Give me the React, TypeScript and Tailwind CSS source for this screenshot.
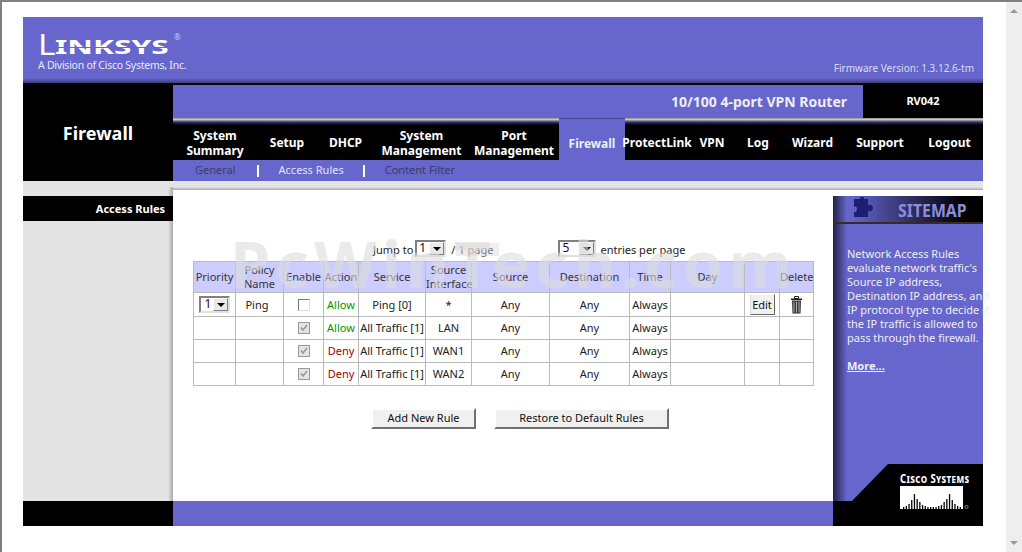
import React from 'react'

const navItems = [
  { lines: ['System', 'Summary'], width: 'w-[84px]' },
  { lines: ['Setup'], width: 'w-[60px]' },
  { lines: ['DHCP'], width: 'w-[57px]' },
  { lines: ['System', 'Management'], width: 'w-[95px]' },
  { lines: ['Port', 'Management'], width: 'w-[90px]' },
  { lines: ['Firewall'], width: 'w-[66px]', active: true },
  { lines: ['ProtectLink'], width: 'w-[64px]' },
  { lines: ['VPN'], width: 'w-[46px]' },
  { lines: ['Log'], width: 'w-[46px]' },
  { lines: ['Wizard'], width: 'w-[63px]' },
  { lines: ['Support'], width: 'w-[72px]' },
  { lines: ['Logout'], width: 'w-[67px]' },
]

const rules = [
  { editable: true, name: 'Ping', action: 'Allow', service: 'Ping [0]', iface: '*' },
  { editable: false, name: '', action: 'Allow', service: 'All Traffic [1]', iface: 'LAN' },
  { editable: false, name: '', action: 'Deny', service: 'All Traffic [1]', iface: 'WAN1' },
  { editable: false, name: '', action: 'Deny', service: 'All Traffic [1]', iface: 'WAN2' },
]

const colWidths = [42, 48, 40, 35, 67, 46, 78, 80, 41, 74, 35, 34]

const ciscoBars = [2, 3, 5, 9, 15, 10, 7, 4, 3, 2, 2, 2, 2, 3, 4, 7, 10, 15, 9, 5, 3, 2]

function FakeSelect({ value, width }: { value: string; width: string }) {
  return (
    <div className={`flex h-[17px] ${width} border-2 border-t-[#808080] border-l-[#808080] border-r-[#e0e0e0] border-b-[#e0e0e0] bg-white`}>
      <span className="flex-1 pl-[2px] text-[12px] leading-[12px] text-[#330033]">{value}</span>
      <span className="flex w-[15px] items-center justify-center border border-t-white border-l-white border-r-[#808080] border-b-[#808080] bg-[#e8e8e8]">
        <span className="h-0 w-0 border-x-[4px] border-t-[4px] border-x-transparent border-t-black" />
      </span>
    </div>
  )
}

function RuleCheckbox({ disabled }: { disabled: boolean }) {
  return (
    <div className={`mx-auto flex h-[12px] w-[12px] items-center justify-center border ${disabled ? 'border-[#999] bg-[#e4e4e4]' : 'border-t-[#777] border-l-[#777] border-r-[#ddd] border-b-[#ddd] bg-white'}`}>
      {disabled && (
        <svg width="10" height="10" viewBox="0 0 10 10">
          <path d="M2 4.5 L4 7 L8 2" fill="none" stroke="#999" strokeWidth="1.6" />
        </svg>
      )}
    </div>
  )
}

function TrashIcon() {
  return (
    <svg width="13" height="18" viewBox="0 0 13 18" className="mx-auto">
      <path d="M4.5 0.5 h4 v2 h-4z" fill="none" stroke="#222" />
      <rect x="1" y="2.5" width="11" height="1.5" fill="#222" />
      <path d="M2 4.5 h9 l-0.5 13 h-8z" fill="#333" />
      <path d="M4 5.5 v11 M6.5 5.5 v11 M9 5.5 v11" stroke="#c4c4c4" strokeWidth="0.9" />
    </svg>
  )
}

function RaisedButton({ label, width }: { label: string; width: string }) {
  return (
    <button
      type="button"
      className={`h-[21px] ${width} border-2 border-t-white border-l-white border-r-[#707070] border-b-[#707070] bg-[#f0f0f0] text-[11px] text-[#111]`}
    >
      {label}
    </button>
  )
}

function LinksysLogo() {
  return (
    <div className="relative h-[37px] w-[150px] text-white">
      <div className="relative flex h-[21px] items-end">
        <span className="origin-left scale-x-[1.15] text-[29px] leading-[21px] font-normal">L</span>
        <span className="ml-[2px] origin-left scale-x-[1.58] text-[20px] leading-[15px] font-bold">INKSYS</span>
        <span className="absolute top-[-1px] left-[136px] text-[8px] leading-[10px] text-[#ccccee]">®</span>
        <span className="absolute top-[14px] left-[16px] h-px w-[118px] bg-[#6666cc]" />
      </div>
      <div className="mt-[5px] text-[10.5px] leading-[12px] tracking-[-0.25px] text-[#e8e8f8]">A Division of Cisco Systems, Inc.</div>
    </div>
  )
}

function CiscoLogo() {
  return (
    <div className="pointer-events-none absolute right-0 bottom-[25px] h-[37px] w-[131px]">
      <svg width="131" height="37" viewBox="0 0 131 37" className="absolute inset-0">
        <polygon points="0,37 36,0 131,0 131,37" fill="#000" />
      </svg>
      <div className="absolute top-[9px] left-[48px] origin-left scale-x-[0.8] text-[12px] leading-[12px] font-bold tracking-[0.5px] whitespace-nowrap text-white [font-variant:small-caps]">
        Cisco Systems
      </div>
    </div>
  )
}

function CiscoBars() {
  return (
    <svg width="70" height="23" viewBox="0 0 70 23" className="absolute right-[13px] bottom-[17px]">
      <rect x="0" y="0" width="63" height="23" fill="#fff" />
      {ciscoBars.map((h, i) => (
        <rect key={i} x={3 + i * 2.7} y={23 - h} width="1.3" height={h} fill="#000" />
      ))}
      <circle cx="66.5" cy="21" r="1.6" fill="none" stroke="#aaa" strokeWidth="0.7" />
    </svg>
  )
}

export default function App() {
  return (
    <div className="flex h-[552px] w-[1022px] overflow-hidden border-t-2 border-l-2 border-[#808080] bg-white [font-family:'Liberation_Sans',Arial,sans-serif]">
      <div className="w-[1004px] pt-[15px] pl-[21px]">
        <div className="relative w-[960px]">
          {/* Top banner */}
          <div className="flex h-[66px] justify-between bg-[linear-gradient(to_bottom,#6666cc_0,#6666cc_61px,#3d3d80_66px)] pt-[16px] pr-[9px] pl-[15px]">
            <LinksysLogo />
            <div className="pt-[29px] text-[10px] leading-[12px] text-[#dcdcf4]">Firmware Version: 1.3.12.6-tm</div>
          </div>

          {/* Title block and navigation */}
          <div className="flex h-[98px]">
            <div className="w-[150px] bg-black pt-[38px] text-center text-[18px] leading-[24px] font-bold text-white">Firewall</div>
            <div className="flex w-[810px] flex-col">
              <div className="h-[2px] bg-black" />
              <div className="flex h-[33px]">
                <div className="flex w-[690px] items-center justify-end bg-[#6666cc] pr-[16px] text-[14px] font-bold text-[#eeeeee]">
                  10/100 4-port VPN Router
                </div>
                <div className="flex flex-1 items-center justify-center bg-black text-[11px] font-bold text-white">RV042</div>
              </div>
              <div className="flex h-[42px] bg-[linear-gradient(to_bottom,#8c8c8c_0,#c8c8c8_1.5px,#777_3px,#33337a_4px,#000_7px)]">
                {navItems.map((item) => (
                  <div
                    key={item.lines.join(' ')}
                    className={`${item.width} flex flex-col items-center justify-center text-[12px] leading-[15px] font-bold whitespace-nowrap ${
                      item.active ? 'border-t border-[#44449a] bg-[#6666cc] pt-[7px] text-[#eeeeee]' : 'mt-[7px] text-white'
                    }`}
                  >
                    {item.lines.map((line) => (
                      <span key={line}>{line}</span>
                    ))}
                  </div>
                ))}
              </div>
              <div className="flex h-[21px] items-center bg-[#6666cc] text-[11px]">
                <span className="ml-[22px] text-[#3d3d66]">General</span>
                <span className="ml-[21px] h-[12px] w-[2px] bg-white" />
                <span className="ml-[20px] text-[#e4e4f4]">Access Rules</span>
                <span className="ml-[19px] h-[12px] w-[2px] bg-white" />
                <span className="ml-[20px] text-[#3d3d66]">Content Filter</span>
              </div>
            </div>
          </div>

          {/* Main area */}
          <div className="flex h-[320px]">
            <div className="flex w-[150px] flex-col bg-[#e4e4e4]">
              <div className="flex h-[15px] justify-end pt-[6px]">
                <div className="w-[5px] bg-[linear-gradient(to_right,#e4e4e4,#a8a8a8)]" />
              </div>
              <div className="h-[25px] bg-black pt-[5px] pr-[8px] text-right text-[11px] leading-[15px] font-bold text-white">Access Rules</div>
              <div className="flex flex-1 justify-end">
                <div className="w-[5px] bg-[linear-gradient(to_right,#e4e4e4,#a8a8a8)]" />
              </div>
            </div>

            <div className="flex flex-1 flex-col">
              <div className="h-[9px] bg-[linear-gradient(to_bottom,#e4e4e4_0,#e4e4e4_6px,#a8a8a8_9px)]" />
              <div className="flex flex-1">
                <div className="relative w-[660px] bg-white pt-[50px] pl-[20px]">
                  <div className="flex h-[17px] text-[11px] leading-[19px] text-[#222]">
                    <span className="ml-[180px]">Jump to</span>
                    <div className="ml-[2px]">
                      <FakeSelect value="1" width="w-[31px]" />
                    </div>
                    <span className="ml-[5px]">/</span>
                    <span className="mt-[3px] ml-[1px] h-[13px] w-[43px] bg-[#eeeeee] pl-[2px] leading-[13px] text-[#777]">1 page</span>
                    <div className="ml-[59px]">
                      <FakeSelect value="5" width="w-[38px]" />
                    </div>
                    <span className="ml-[4px]">entries per page</span>
                  </div>

                  <table className="mt-[4px] w-[620px] table-fixed border-collapse text-center text-[11px] leading-[14px] text-[#222]">
                    <colgroup>
                      {colWidths.map((w, i) => (
                        <col key={i} style={{ width: w }} />
                      ))}
                    </colgroup>
                    <thead>
                      <tr className="h-[31px] bg-[#ccccff] text-[#333]">
                        {['Priority', 'Policy Name', 'Enable', 'Action', 'Service', 'Source Interface', 'Source', 'Destination', 'Time', 'Day', '', 'Delete'].map((h, i) => (
                          <th key={i} className="border border-[#bbbbbb] p-0 font-normal">
                            {h}
                          </th>
                        ))}
                      </tr>
                    </thead>
                    <tbody>
                      {rules.map((rule, i) => (
                        <tr key={i} className={rule.editable ? 'h-[24px]' : 'h-[23px]'}>
                          <td className="border border-[#bbbbbb] p-0">
                            {rule.editable && (
                              <div className="flex justify-center">
                                <FakeSelect value="1" width="w-[31px]" />
                              </div>
                            )}
                          </td>
                          <td className="border border-[#bbbbbb] p-0 pr-[5px]">{rule.name}</td>
                          <td className="border border-[#bbbbbb] p-0">
                            <RuleCheckbox disabled={!rule.editable} />
                          </td>
                          <td className={`border border-[#bbbbbb] p-0 ${rule.action === 'Allow' ? 'text-[#009900]' : 'text-[#990000]'}`}>{rule.action}</td>
                          <td className="border border-[#bbbbbb] p-0 whitespace-nowrap">{rule.service}</td>
                          <td className="border border-[#bbbbbb] p-0">{rule.iface}</td>
                          <td className="border border-[#bbbbbb] p-0">Any</td>
                          <td className="border border-[#bbbbbb] p-0">Any</td>
                          <td className="border border-[#bbbbbb] p-0">Always</td>
                          <td className="border border-[#bbbbbb] p-0" />
                          <td className="border border-[#bbbbbb] p-0">
                            {rule.editable && (
                              <div className="flex justify-center">
                                <button type="button" className="h-[21px] w-[25px] border border-t-white border-l-[#ddd] border-r-[#666] border-b-[#666] bg-[#f0f0f0] text-[11px] text-[#111]">
                                  Edit
                                </button>
                              </div>
                            )}
                          </td>
                          <td className="border border-[#bbbbbb] p-0">{rule.editable && <TrashIcon />}</td>
                        </tr>
                      ))}
                    </tbody>
                  </table>

                  <div className="mt-[22px] ml-[178px] flex gap-[18px]">
                    <RaisedButton label="Add New Rule" width="w-[105px]" />
                    <RaisedButton label="Restore to Default Rules" width="w-[175px]" />
                  </div>

                  {/* Watermark over the table */}
                  <div className="pointer-events-none absolute top-[41px] left-[57px] text-[65px] leading-[65px] font-bold tracking-[5px] whitespace-nowrap text-[#dcdcdc]/60">
                    PcWinTech.com
                  </div>
                </div>

                <div className="flex w-[150px] flex-col pt-[6px]">
                  <div className="h-[28px] border-b-2 border-[#3a2a20] bg-[linear-gradient(to_right,#222244_0,#6666cc_14px,#5a5abc_30px,#000_130px)]">
                    <div className="flex h-full">
                      <svg width="26" height="25" viewBox="0 0 26 25" className="ml-[19px]">
                        <path d="M2 3 h6 c-1-3 5-3 4 0 h4 v6 c3-1 5 1 5 3 s-2 4-5 3 v6 H2 v-5 c2 1 3-1 3-3 s-1-3-3-2z" fill="#1d1d72" />
                      </svg>
                      <span className="ml-[20px] origin-left scale-x-[0.88] pt-[3px] text-[18px] leading-[22px] font-bold text-[#8c8cdc]">SITEMAP</span>
                    </div>
                  </div>
                  <div className="flex flex-1 bg-[#6666cc]">
                    <div className="w-[14px] bg-[linear-gradient(to_right,#222244,#6666cc)]" />
                    <div className="w-[130px] pt-[23px] text-[11px] leading-[14px] text-[#eeeeee]">
                      <p className="whitespace-nowrap">
                        Network Access Rules
                        <br />
                        evaluate network traffic's
                        <br />
                        Source IP address,
                        <br />
                        Destination IP address, and
                        <br />
                        IP protocol type to decide if
                        <br />
                        the IP traffic is allowed to
                        <br />
                        pass through the firewall.
                      </p>
                      <p className="mt-[14px] font-bold underline">More...</p>
                    </div>
                  </div>
                </div>
              </div>
            </div>
          </div>

          {/* Footer band */}
          <div className="flex h-[25px]">
            <div className="w-[150px] bg-black" />
            <div className="w-[660px] bg-[#6666cc]" />
            <div className="w-[150px] bg-black" />
          </div>

          <CiscoLogo />
          <CiscoBars />
        </div>
      </div>

      {/* Scrollbar */}
      <div className="flex h-full w-[16px] flex-col items-center justify-between bg-[#eeeeee] py-[7px]">
        <span className="h-0 w-0 border-x-[4px] border-b-[4px] border-x-transparent border-b-[#999]" />
        <span className="h-0 w-0 border-x-[4px] border-t-[4px] border-x-transparent border-t-[#999]" />
      </div>
    </div>
  )
}
